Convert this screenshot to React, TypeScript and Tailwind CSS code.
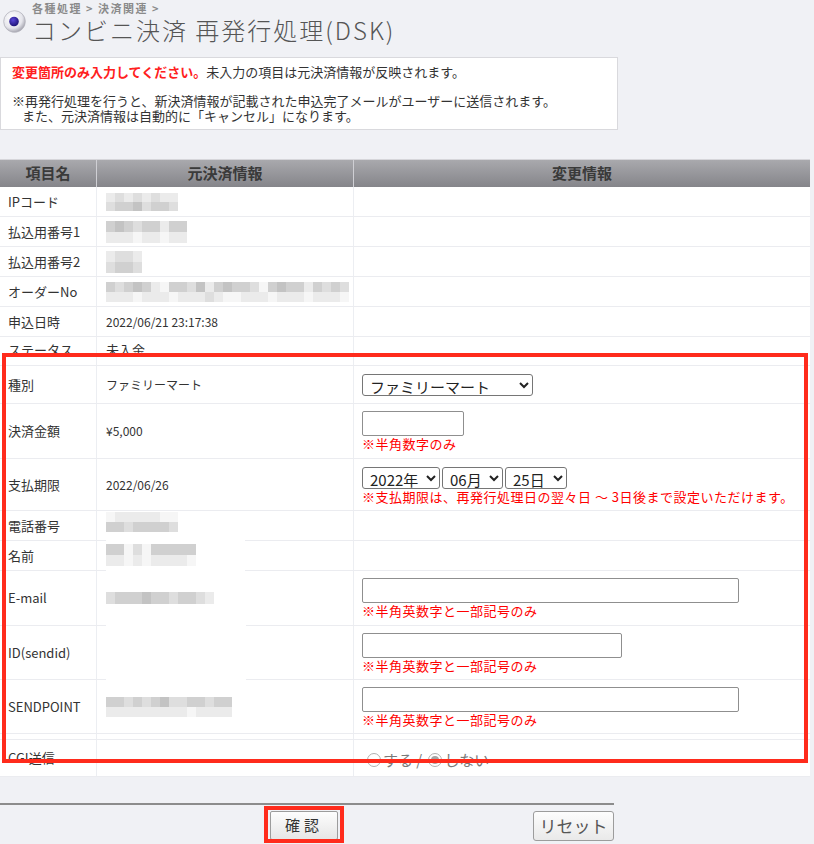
import React from 'react';

const SHADES = [
  'bg-[#f6f6f6]',
  'bg-[#ebebeb]',
  'bg-[#dedede]',
  'bg-[#d0d0d0]',
  'bg-[#c3c3c3]',
];

// pixelated placeholder for masked values
function Mosaic({ rows, h = 'h-[10px]' }: { rows: string[]; h?: string }) {
  return (
    <div className="flex flex-col">
      {rows.map((r, i) => (
        <div key={i} className="flex">
          {r.split('').map((c, j) => (
            <div key={j} className={`w-[9px] ${h} ${SHADES[Number(c)]}`} />
          ))}
        </div>
      ))}
    </div>
  );
}

function Note({ children }: { children: React.ReactNode }) {
  return (
    <div className="text-[13px] leading-[15px] tracking-[0.5px] text-[#ff0000] whitespace-nowrap">{children}</div>
  );
}

function Row({
  label,
  orig,
  change,
  h,
  top = false,
}: {
  label: React.ReactNode;
  orig?: React.ReactNode;
  change?: React.ReactNode;
  h: string;
  top?: boolean;
}) {
  return (
    <div className={`grid grid-cols-[97px_257px_456px] border-b border-[#ebecf0] bg-white ${h}`}>
      <div className="flex items-center border-r border-[#eceef2] pl-[8px] text-[13px] text-[#333]">{label}</div>
      <div className="flex items-center border-r border-[#eceef2] pl-[9px] text-[12px] text-[#333]">{orig}</div>
      <div className={`flex flex-col pl-[8px] ${top ? 'pt-[7px]' : 'justify-center'}`}>{change}</div>
    </div>
  );
}

const inputCls = 'h-[25px] rounded-[2px] border border-[#8f8f8f] bg-white';
const selectCls =
  "h-[22px] rounded-[3px] border border-[#767676] bg-white pl-[3px] py-0 text-[15px] leading-[16px] text-[#222] font-['Noto_Sans_CJK_JP',sans-serif]";

export default function App() {
  return (
    <div className="relative min-h-[844px] w-[814px] overflow-hidden bg-[#f0f1f5] font-['Noto_Sans_CJK_JP',sans-serif] text-[#333]">
      {/* Title */}
      <div className="flex h-[57px]">
        <div className="pl-[3px] pt-[10px]">
          <svg width="23" height="23" viewBox="0 0 23 23">
            <defs>
              <radialGradient id="ball" cx="40%" cy="35%" r="65%">
                <stop offset="0%" stopColor="#ffffff" />
                <stop offset="70%" stopColor="#e6e6ec" />
                <stop offset="100%" stopColor="#a9a9b3" />
              </radialGradient>
              <radialGradient id="dot" cx="40%" cy="35%" r="70%">
                <stop offset="0%" stopColor="#5a48d8" />
                <stop offset="100%" stopColor="#1a1070" />
              </radialGradient>
            </defs>
            <circle cx="11.5" cy="11.5" r="10.8" fill="url(#ball)" stroke="#b4b4bc" strokeWidth="0.8" />
            <circle cx="11" cy="11.5" r="4.8" fill="url(#dot)" />
          </svg>
        </div>
        <div className="flex flex-col pl-[6px] pt-[2px]">
          <div className="text-[11px] font-bold leading-[13px] tracking-[1.5px] text-[#8a8a8a]">
            各種処理 &gt; 決済関連 &gt;
          </div>
          <div className="text-[24px] font-light leading-[30px] tracking-[2px] text-[#555]">
            コンビニ決済 再発行処理(DSK)
          </div>
        </div>
      </div>

      {/* Notice */}
      <div className="h-[73px] w-[618px] border border-[#d9d9dd] bg-white pl-[11px] pt-[6px] text-[13px] leading-[15px]">
        <div>
          <span className="font-bold text-[#ff2020]">変更箇所のみ入力してください。</span>
          未入力の項目は元決済情報が反映されます。
        </div>
        <div className="mt-[14px]">※再発行処理を行うと、新決済情報が記載された申込完了メールがユーザーに送信されます。</div>
        <div className="pl-[10px]">また、元決済情報は自動的に「キャンセル」になります。</div>
      </div>

      {/* Table */}
      <div className="relative mt-[29px] w-[810px]">
        <div className="grid h-[28px] grid-cols-[97px_257px_456px] border-t border-[#d6d6da] bg-linear-to-b from-[#a9a9ad] to-[#85858a] text-[15px] font-bold text-[#3a3a3a]">
          <div className="flex items-center justify-center border-r border-[#cfcfd4]">項目名</div>
          <div className="flex items-center justify-center border-r border-[#cfcfd4]">元決済情報</div>
          <div className="flex items-center justify-center">変更情報</div>
        </div>

        <Row h="h-[30px]" label="IPコード" orig={<Mosaic rows={['12121211', '23342332']} h="h-[9px]" />} />
        <Row h="h-[30px]" label="払込用番号1" orig={<Mosaic rows={['343233133', '111011011']} h="h-[11px]" />} />
        <Row h="h-[30px]" label="払込用番号2" orig={<Mosaic rows={['1221', '2332']} h="h-[11px]" />} />
        <Row
          h="h-[30px]"
          label="オーダーNo"
          orig={<Mosaic rows={['323431033241343320343313232', '111011101112100111011101110']} h="h-[10px]" />}
        />
        <Row h="h-[30px]" label="申込日時" orig="2022/06/21 23:17:38" />
        <div className="grid h-[16px] grid-cols-[97px_257px_456px] overflow-hidden bg-white text-[#333]">
          <div className="border-r border-[#eceef2] pl-[8px] pt-[5px] text-[13px] leading-[16px]">ステータス</div>
          <div className="border-r border-[#eceef2] pl-[9px] pt-[5px] text-[13px] leading-[16px]">未入金</div>
          <div />
        </div>
        <Row h="h-[13px]" label="" />

        <Row
          h="h-[38px]"
          label="種別"
          orig="ファミリーマート"
          change={
            <select className={`${selectCls} w-[171px]`} defaultValue="fm">
              <option value="fm">ファミリーマート</option>
            </select>
          }
        />
        <Row
          h="h-[55px]"
          top
          label="決済金額"
          orig="¥5,000"
          change={
            <>
              <input className={`${inputCls} w-[102px]`} />
              <Note>※半角数字のみ</Note>
            </>
          }
        />
        <Row
          h="h-[52px]"
          top
          label="支払期限"
          orig="2022/06/26"
          change={
            <>
              <div className="flex gap-[2px] pt-[1px]">
                <select className={`${selectCls} w-[78px]`} defaultValue="2022">
                  <option value="2022">2022年</option>
                </select>
                <select className={`${selectCls} w-[61px]`} defaultValue="06">
                  <option value="06">06月</option>
                </select>
                <select className={`${selectCls} w-[62px]`} defaultValue="25">
                  <option value="25">25日</option>
                </select>
              </div>
              <Note>※支払期限は、再発行処理日の翌々日 ～ 3日後まで設定いただけます。</Note>
            </>
          }
        />
        <Row h="h-[30px]" label="電話番号" orig={<Mosaic rows={['01111100', '33233332']} h="h-[10px]" />} />
        <Row h="h-[30px]" label="名前" orig={<Mosaic rows={['3302033333', '1101011110']} h="h-[11px]" />} />
        <Row
          h="h-[55px]"
          top
          label="E-mail"
          orig={<Mosaic rows={['233343323321']} h="h-[12px]" />}
          change={
            <>
              <input className={`${inputCls} w-[377px]`} />
              <Note>※半角英数字と一部記号のみ</Note>
            </>
          }
        />
        <Row
          h="h-[54px]"
          top
          label="ID(sendid)"
          change={
            <>
              <input className={`${inputCls} w-[260px]`} />
              <Note>※半角英数字と一部記号のみ</Note>
            </>
          }
        />
        <Row
          h="h-[54px]"
          top
          label="SENDPOINT"
          orig={<Mosaic rows={['33232342233233', '11111111101111']} h="h-[10px]" />}
          change={
            <>
              <input className={`${inputCls} w-[377px]`} />
              <Note>※半角英数字と一部記号のみ</Note>
            </>
          }
        />
        <Row h="h-[6px]" label="" />
        <Row
          h="h-[37px]"
          label="CGI送信"
          change={
            <div className="flex items-center gap-[2px] pl-[5px] pt-[4px] text-[15px] text-[#7a7a7a]">
              <span className="h-[14px] w-[14px] rounded-full border border-[#b0b0b0] bg-white" />
              <span className="mr-[4px]">する /</span>
              <span className="flex h-[14px] w-[14px] items-center justify-center rounded-full border border-[#b0b0b0] bg-white">
                <span className="h-[8px] w-[8px] rounded-full bg-[#a4a4a4]" />
              </span>
              <span>しない</span>
            </div>
          }
        />

        {/* white patches left by the masking */}
        <div className="absolute left-[106px] top-[352px] h-[61px] w-[139px] bg-white">
          <div className="pt-[1px]">
            <Mosaic rows={['01111100', '33233332']} h="h-[10px]" />
          </div>
          <div className="pt-[12px]">
            <Mosaic rows={['3302033333', '1101011110']} h="h-[11px]" />
          </div>
        </div>
        <div className="absolute left-[106px] top-[412px] h-[118px] w-[140px] bg-white pt-[21px]">
          <Mosaic rows={['233343323321']} h="h-[12px]" />
        </div>
      </div>

      {/* Footer buttons */}
      <div className="mt-[26px] h-[2px] w-[614px] bg-[#8c8c8c]" />
      <div className="flex w-[614px] pt-[6px]">
        <button className="ml-[270px] h-[29px] w-[68px] rounded-[2px] border border-[#9c9c9c] bg-linear-to-b from-[#fdfdfd] to-[#e6e6e6] text-[15px] tracking-[4px] text-[#333]">
          確認
        </button>
        <button className="ml-auto h-[30px] w-[81px] rounded-[3px] border border-[#9c9c9c] bg-linear-to-b from-[#fdfdfd] to-[#e9e9e9] text-[17px] text-[#555]">
          リセット
        </button>
      </div>

      {/* red annotation frames */}
      <div className="pointer-events-none absolute left-[2px] top-[353px] h-[410px] w-[806px] border-[4px] border-[#ff2b1c]" />
      <div className="pointer-events-none absolute left-[264px] top-[806px] h-[37px] w-[80px] border-[4px] border-[#ff2b1c]" />
    </div>
  );
}
